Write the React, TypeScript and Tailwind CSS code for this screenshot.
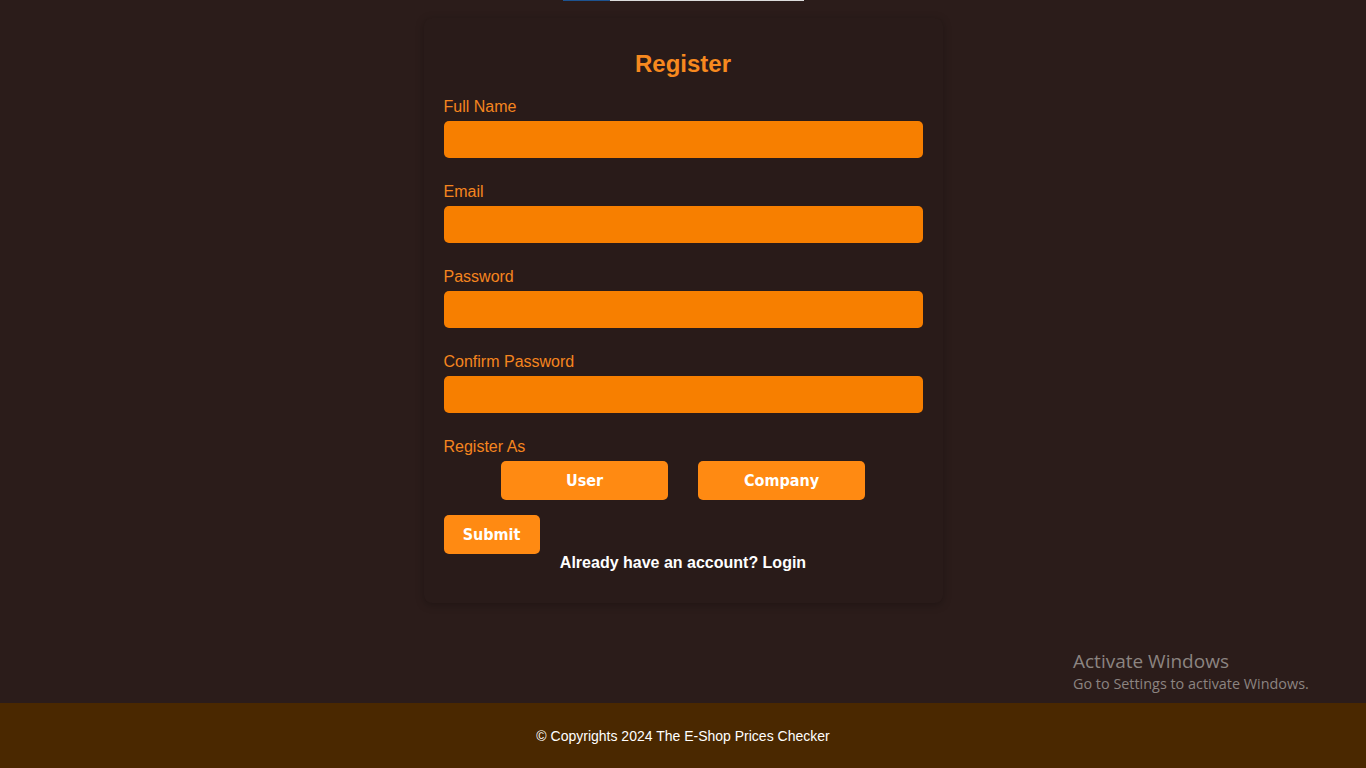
import React from 'react';

const fields = ['Full Name', 'Email', 'Password', 'Confirm Password'];

export default function App() {
  return (
    <div className="relative min-h-[768px] flex flex-col bg-[#2b1c1a] font-['Liberation_Sans',Arial,sans-serif]">
      {/* thin strip at the very top */}
      <div className="flex justify-center h-px">
        <div className="flex w-[241px]">
          <div className="w-[47px] bg-[#1d5390]" />
          <div className="flex-1 bg-[#dcdcdc]" />
        </div>
      </div>

      <main className="h-[702px] pt-[17px]">
        <div className="mx-auto w-[519px] rounded-lg bg-[#291b19] shadow-[0_2px_8px_rgba(0,0,0,0.25)] px-5 pt-[32px] pb-[31px]">
          <h2 className="text-center text-[24px] leading-[28px] font-bold text-[#f7891f]">Register</h2>
          <form className="mt-[20px]" onSubmit={e => e.preventDefault()}>
            {fields.map(f => (
              <div key={f} className="mb-[25px]">
                <label className="block text-[16px] leading-[18px] text-[#f5851f]">{f}</label>
                <input
                  type={f.includes('Password') ? 'password' : 'text'}
                  className="mt-[5px] block w-full h-[37px] rounded-[5px] bg-[#f77f00] outline-none px-2"
                />
              </div>
            ))}
            <label className="block text-[16px] leading-[18px] text-[#f5851f]">Register As</label>
            <div className="mt-[5px] flex justify-center gap-[30px]">
              <button type="button" className="w-[167px] h-[39px] pt-px rounded-[5px] bg-[#ff8a12] text-white text-[16px] font-bold font-['DejaVu_Sans_Condensed','DejaVu_Sans',sans-serif]">User</button>
              <button type="button" className="w-[167px] h-[39px] pt-px rounded-[5px] bg-[#ff8a12] text-white text-[16px] font-bold font-['DejaVu_Sans_Condensed','DejaVu_Sans',sans-serif]">Company</button>
            </div>
            <button type="submit" className="mt-[15px] block w-[96px] h-[39px] pt-px rounded-[5px] bg-[#ff8a12] text-white text-[16px] font-bold font-['DejaVu_Sans_Condensed','DejaVu_Sans',sans-serif]">Submit</button>
            <p className="text-center text-white font-bold text-[16px] leading-[18px]">Already have an account? Login</p>
          </form>
        </div>
      </main>

      <footer className="h-[65px] pt-[2px] bg-[#4a2800] flex items-center justify-center">
        <p className="text-white text-[14px]">© Copyrights 2024 The E-Shop Prices Checker</p>
      </footer>

      <div className="absolute left-[1073px] top-[649px] text-[#8c8481] font-['Open_Sans','DejaVu_Sans',sans-serif] pointer-events-none">
        <p className="text-[19px] leading-[25px]">Activate Windows</p>
        <p className="text-[14.4px] leading-[20px]">Go to Settings to activate Windows.</p>
      </div>
    </div>
  );
}
